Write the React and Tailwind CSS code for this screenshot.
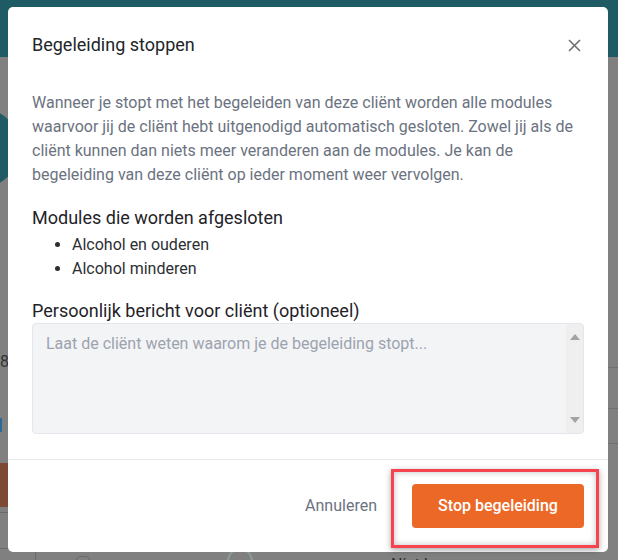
import React from "react";

function Background() {
  return (
    <div className="w-[618px] h-[560px] flex flex-col bg-[#808080]">
      <div className="h-[57px] shrink-0 bg-[#1e5b65]" />
      <div className="flex-1 flex">
        <div className="w-[40px] flex flex-col">
          <div className="mt-[51px] -ml-[60px] w-[80px] h-[80px] rounded-full bg-[#1e5b65]" />
          <div className="mt-[164px] text-[16px] leading-[20px] text-[#333]">8</div>
          <div className="mt-[46px] w-[2px] h-[14px] bg-[#2a6a9a]" />
          <div className="mt-[31px] w-[8px] h-[44px] bg-[#7c4a32]" />
          <div className="mt-[5px] w-[8px] h-[1px] bg-[#6a6a6a]" />
          <div className="mt-[35px] -ml-[4px] w-[40px] h-[20px] rounded border border-[#6a6a6a]" />
        </div>
        <div className="flex-1 flex flex-col justify-end">
          <div className="h-[20px] flex items-start">
            <div className="ml-[36px] mt-[8px] w-[14px] h-[14px] rounded border border-[#6a6a6a]" />
            <div className="ml-[110px] mt-[12px] w-[160px] h-[8px] bg-[#4f6f70] flex justify-center">
              <div className="-mt-[12px] ml-[-80px] w-[26px] h-[26px] rounded-full border-2 border-[#8a9a9a]" />
            </div>
            <div className="ml-[31px] mt-[7px] text-[16px] leading-[20px] text-[#2b2b2b] whitespace-nowrap">Niet begonnen</div>
          </div>
        </div>
        <div className="w-[10px] flex flex-col">
          <div className="mt-[310px] h-[1px] bg-[#707070]" />
          <div className="mt-[40px] h-[1px] bg-[#707070]" />
          <div className="mt-[34px] h-[1px] bg-[#707070]" />
        </div>
      </div>
    </div>
  );
}

export default function App() {
  return (
    <div className="relative w-[618px] h-[560px] overflow-hidden" style={{ fontFamily: "Roboto, 'Liberation Sans', sans-serif" }}>
      <Background />

      {/* modal */}
      <div className="absolute left-[8px] top-[7px] w-[600px] h-[545px] bg-white rounded-[5px] flex flex-col">
        <div className="flex items-center justify-between pl-6 pr-[26px] pt-[26px] pb-[34px]">
          <h2 className="text-[18px] leading-[24px] text-[#212529] font-normal">Begeleiding stoppen</h2>
          <button className="w-[16px] h-[16px] flex items-center justify-center">
            <svg width="13" height="13" viewBox="0 0 13 13" fill="none" stroke="#707070" strokeWidth="1.6">
              <path d="M1 1L12 12M12 1L1 12" />
            </svg>
          </button>
        </div>
        <div className="px-6 pb-[25px] border-b border-[#e5e8ec]">
          <p className="text-[16px] leading-[24px] text-[#6b7280]">
            Wanneer je stopt met het begeleiden van deze cliënt worden alle modules waarvoor jij de cliënt hebt uitgenodigd automatisch gesloten. Zowel jij als de cliënt kunnen dan niets meer veranderen aan de modules. Je kan de begeleiding van deze cliënt op ieder moment weer vervolgen.
          </p>
          <h3 className="mt-[19px] text-[18px] leading-[24px] text-[#1f2329]">Modules die worden afgesloten</h3>
          <ul className="mt-[3px] list-disc pl-10 text-[16px] leading-[24px] text-[#2b2f33]">
            <li>Alcohol en ouderen</li>
            <li>Alcohol minderen</li>
          </ul>
          <h3 className="mt-[18px] text-[18px] leading-[24px] text-[#1f2329]">Persoonlijk bericht voor cliënt (optioneel)</h3>
          <div className="h-[111px] rounded-[4px] border border-[#e3e6ea] bg-[#f3f4f6] flex">
            <div className="flex-1 px-[13px] py-[8px] text-[16px] leading-[24px] text-[#9ca3af]">
              Laat de cliënt weten waarom je de begeleiding stopt...
            </div>
            <div className="w-[17px] bg-[#efefef] flex flex-col items-center justify-between py-[10px] rounded-r-[4px]">
              <div className="w-0 h-0 border-l-[5px] border-r-[5px] border-b-[6px] border-l-transparent border-r-transparent border-b-[#a3a3a3]" />
              <div className="w-0 h-0 border-l-[5px] border-r-[5px] border-t-[6px] border-l-transparent border-r-transparent border-t-[#a3a3a3]" />
            </div>
          </div>
        </div>
        <div className="flex-1 flex items-center justify-end gap-[35px] px-6">
          <button className="text-[16px] text-[#6b7280]">Annuleren</button>
          <button className="w-[172px] h-[44px] rounded-[4px] bg-[#eb6827] text-white text-[16px] font-medium">Stop begeleiding</button>
        </div>
      </div>

      {/* annotation highlight */}
      <div className="absolute left-[391px] top-[469px] w-[208px] h-[79px] border-[3px] border-[#f5434f] shadow-[0_2px_6px_rgba(0,0,0,0.35),inset_0_0_6px_rgba(0,0,0,0.25)]" />
    </div>
  );
}
